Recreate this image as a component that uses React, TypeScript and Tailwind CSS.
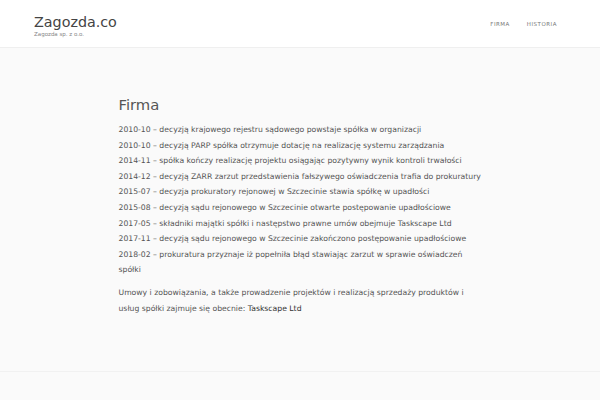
const events = [
  '2010-10 – decyzją krajowego rejestru sądowego powstaje spółka w organizacji',
  '2010-10 – decyzją PARP spółka otrzymuje dotację na realizację systemu zarządzania',
  '2014-11 – spółka kończy realizację projektu osiągając pozytywny wynik kontroli trwałości',
  '2014-12 – decyzją ZARR zarzut przedstawienia fałszywego oświadczenia trafia do prokuratury',
  '2015-07 – decyzja prokuratory rejonowej w Szczecinie stawia spółkę w upadłości',
  '2015-08 – decyzją sądu rejonowego w Szczecinie otwarte postępowanie upadłościowe',
  '2017-05 – składniki majątki spółki i następstwo prawne umów obejmuje Taskscape Ltd',
  '2017-11 – decyzją sądu rejonowego w Szczecinie zakończono postępowanie upadłościowe',
  '2018-02 – prokuratura przyznaje iż popełniła błąd stawiając zarzut w sprawie oświadczeń spółki',
]

export default function App() {
  return (
    <div className="flex h-[400px] w-[600px] flex-col overflow-hidden bg-[#fafafa] font-['DejaVu_Sans',sans-serif] text-[#555]">
      <header className="h-[48px] shrink-0 border-b border-b-[#efefef] bg-white">
        <div className="mx-auto flex w-[532px] items-start justify-between">
          <div className="pt-[13px]">
            <div className="text-[14.3px] leading-[18px] text-[#444]">Zagozda.co</div>
            <div className="text-[5.5px] leading-[7px] text-[#888]">Zagozda sp. z o.o.</div>
          </div>
          <nav className="flex gap-[17px] pt-[20px] pr-[9px] text-[5.5px] uppercase tracking-[0.5px] text-[#777]">
            <span>Firma</span>
            <span>Historia</span>
          </nav>
        </div>
      </header>

      <main className="mx-auto h-[323px] w-[363px] shrink-0 pt-[46px]">
        <h1 className="mb-[6px] text-[14.8px] leading-[22px] text-[#555]">Firma</h1>
        <ul className="text-[7.7px] leading-[15.6px]">
          {events.map((e, i) => (
            <li key={i}>{e}</li>
          ))}
        </ul>
        <p className="mt-[7px] text-[7.7px] leading-[15.6px]">
          Umowy i zobowiązania, a także prowadzenie projektów i realizacją sprzedaży produktów i usług spółki
          zajmuje się obecnie: <span className="text-[#333]">Taskscape Ltd</span>
        </p>
      </main>

      <footer className="flex-1 border-t border-t-[#f1f1f1]" />
    </div>
  )
}
